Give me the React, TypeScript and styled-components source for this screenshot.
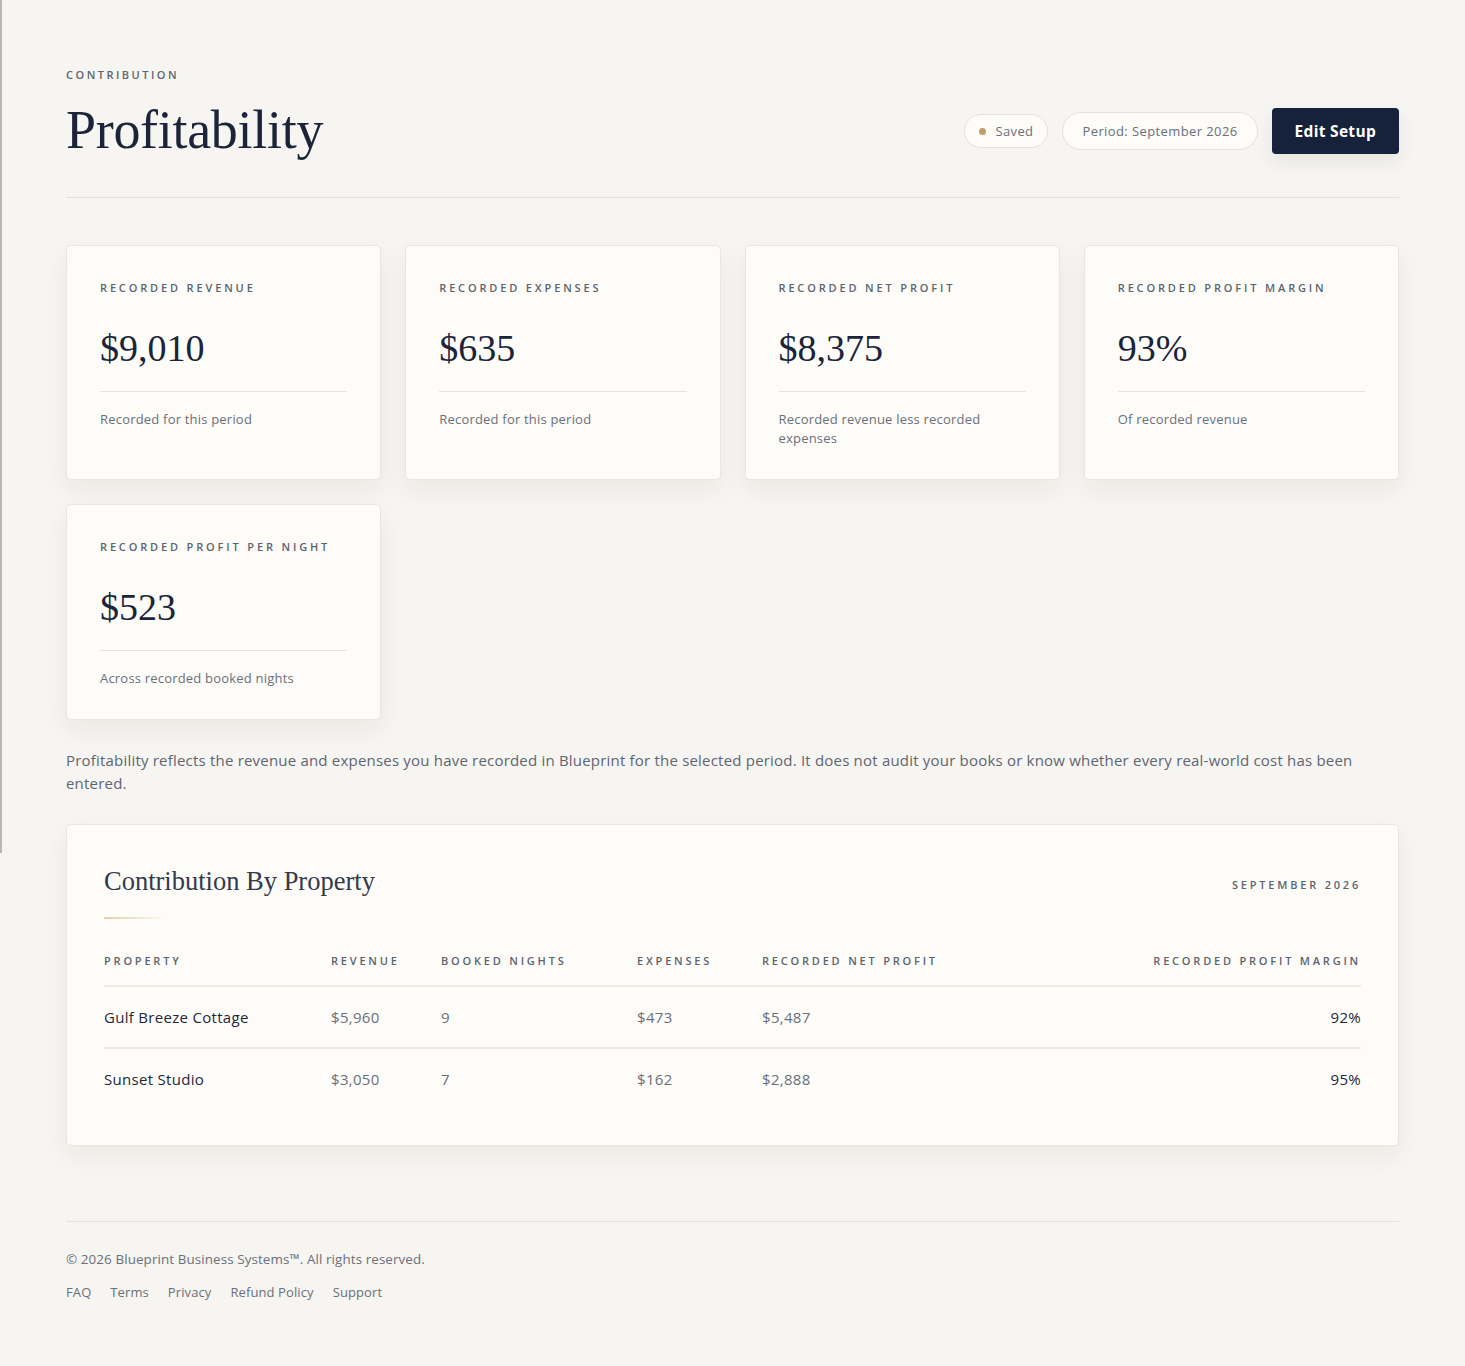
import React from "react";
import styled, { createGlobalStyle } from "styled-components";

const GlobalStyle = createGlobalStyle`
  html, body {
    margin: 0;
    padding: 0;
    background: #f6f5f1;
  }
  body {
    font-family: "Open Sans", "Noto Sans", sans-serif;
    color: #1b2438;
  }
  * { box-sizing: border-box; }
`;

const serif = `"Liberation Serif", "DejaVu Serif", serif`;

const EdgeLine = styled.div`
  position: fixed;
  left: 0;
  top: 0;
  width: 2px;
  height: 853px;
  background: #b9b7b1;
`;

const Page = styled.main`
  padding: 67px 66px 60px 66px;
`;

const Header = styled.header`
  display: flex;
  justify-content: space-between;
  align-items: flex-end;
  padding-bottom: 37px;
  border-bottom: 1px solid #e4e1da;
`;

const Eyebrow = styled.div`
  font-size: 11px;
  line-height: 16px;
  font-weight: 600;
  letter-spacing: 2.5px;
  color: #5c6470;
  text-transform: uppercase;
`;

const Title = styled.h1`
  margin: 17px 0 0 0;
  font-family: ${serif};
  font-weight: 400;
  font-size: 54px;
  line-height: 60px;
  color: #1b2438;
  letter-spacing: -0.3px;
`;

const Actions = styled.div`
  display: flex;
  align-items: center;
  gap: 14px;
  padding-bottom: 6px;
`;

const Pill = styled.div<{ $tall?: boolean }>`
  display: flex;
  align-items: center;
  gap: 9px;
  height: ${(p) => (p.$tall ? "38px" : "34px")};
  padding: 0 ${(p) => (p.$tall ? "19px" : "14px")};
  border: 1px solid #e6e2d9;
  border-radius: 20px;
  background: #fdfcf8;
  font-size: 13px;
  color: #6a707a;
  letter-spacing: 0.4px;
`;

const Dot = styled.span`
  width: 7px;
  height: 7px;
  border-radius: 50%;
  background: #bf9e6a;
`;

const PrimaryButton = styled.button`
  height: 46px;
  padding: 0 23px;
  border: none;
  border-radius: 4px;
  background: #16213a;
  color: #ffffff;
  font-family: inherit;
  font-size: 15.5px;
  font-weight: 700;
  letter-spacing: 0.3px;
  box-shadow: 0 8px 18px rgba(22, 33, 58, 0.08);
`;

const Grid = styled.section`
  display: grid;
  grid-template-columns: repeat(4, 1fr);
  gap: 24px;
  margin-top: 47px;
  align-items: start;
`;

const Card = styled.div<{ $tall?: boolean }>`
  background: #fdfcf9;
  border: 1px solid #e9e6e0;
  border-radius: 5px;
  box-shadow: 0 10px 24px rgba(30, 30, 20, 0.06);
  padding: 34px 33px 0 33px;
  height: ${(p) => (p.$tall ? "235px" : "216px")};
`;

const CardLabel = styled.div`
  font-size: 11px;
  font-weight: 600;
  letter-spacing: 2.85px;
  color: #5c6470;
  text-transform: uppercase;
  line-height: 16px;
`;

const CardValue = styled.div`
  font-family: ${serif};
  font-size: 38px;
  line-height: 44px;
  margin-top: 30px;
  padding-bottom: 21px;
  border-bottom: 1px solid #e6e3dc;
  color: #1b2438;
  font-variant-numeric: oldstyle-nums;
`;

const CardNote = styled.div`
  margin-top: 18px;
  font-size: 13px;
  line-height: 19px;
  color: #6a707a;
  letter-spacing: 0.2px;
  max-width: 220px;
`;

const Disclaimer = styled.p`
  margin: 29px 0 0 0;
  font-size: 15px;
  line-height: 23px;
  color: #5f6571;
  letter-spacing: 0.2px;
`;

const TableCard = styled.section`
  margin-top: 29px;
  background: #fdfcf9;
  border: 1px solid #e9e6e0;
  border-radius: 5px;
  box-shadow: 0 10px 24px rgba(30, 30, 20, 0.06);
  padding: 38px 37px 36px 37px;
`;

const TableHead = styled.div`
  display: flex;
  justify-content: space-between;
  align-items: flex-start;
`;

const SectionTitle = styled.h2`
  margin: 0;
  font-family: ${serif};
  font-weight: 400;
  font-size: 26.5px;
  line-height: 36px;
  color: #333a4c;
`;

const GoldRule = styled.div`
  width: 62px;
  height: 2px;
  margin-top: 18px;
  background: linear-gradient(90deg, #e0cfa8, rgba(224, 207, 168, 0));
`;

const PeriodTag = styled.div`
  margin-top: 14px;
  font-size: 11px;
  font-weight: 600;
  letter-spacing: 2.8px;
  color: #5c6470;
`;

const Table = styled.table`
  width: 100%;
  margin-top: 34px;
  border-collapse: collapse;
`;

const Th = styled.th<{ $right?: boolean; $w?: string }>`
  text-align: ${(p) => (p.$right ? "right" : "left")};
  width: ${(p) => p.$w || "auto"};
  padding: 0 0 17px 0;
  font-size: 11px;
  font-weight: 600;
  letter-spacing: 2.8px;
  color: #5c6470;
  border-bottom: 2px solid #eeebe5;
`;

const Td = styled.td<{ $right?: boolean; $strong?: boolean }>`
  text-align: ${(p) => (p.$right ? "right" : "left")};
  padding: 20px 0;
  font-size: 15px;
  line-height: 20px;
  color: ${(p) => (p.$strong ? "#1f2738" : "#6a707a")};
  letter-spacing: 0.3px;
`;

const Tr = styled.tr`
  & + & td {
    border-top: 2px solid #eeebe5;
  }
`;

const Footer = styled.footer`
  margin-top: 75px;
  border-top: 1px solid #e6e3dc;
  padding-top: 27px;
`;

const Copyright = styled.div`
  font-size: 13.4px;
  line-height: 20px;
  color: #6a707a;
  letter-spacing: 0.1px;
`;

const FooterLinks = styled.nav`
  display: flex;
  gap: 19px;
  margin-top: 13px;
`;

const FooterLink = styled.a`
  font-size: 13px;
  line-height: 20px;
  color: #6a707a;
  text-decoration: none;
  letter-spacing: 0.1px;
`;

const metrics = [
  { label: "Recorded Revenue", value: "$9,010", note: "Recorded for this period" },
  { label: "Recorded Expenses", value: "$635", note: "Recorded for this period" },
  { label: "Recorded Net Profit", value: "$8,375", note: "Recorded revenue less recorded expenses" },
  { label: "Recorded Profit Margin", value: "93%", note: "Of recorded revenue" },
  { label: "Recorded Profit Per Night", value: "$523", note: "Across recorded booked nights" },
];

const rows = [
  { name: "Gulf Breeze Cottage", revenue: "$5,960", nights: "9", expenses: "$473", net: "$5,487", margin: "92%" },
  { name: "Sunset Studio", revenue: "$3,050", nights: "7", expenses: "$162", net: "$2,888", margin: "95%" },
];

const App: React.FC = () => {
  return (
    <>
      <GlobalStyle />
      <EdgeLine />
      <Page>
        <Header>
          <div>
            <Eyebrow>Contribution</Eyebrow>
            <Title>Profitability</Title>
          </div>
          <Actions>
            <Pill>
              <Dot />
              Saved
            </Pill>
            <Pill $tall>Period: September 2026</Pill>
            <PrimaryButton>Edit Setup</PrimaryButton>
          </Actions>
        </Header>

        <Grid>
          {metrics.map((m, i) => (
            <Card key={m.label} $tall={i < 4}>
              <CardLabel>{m.label}</CardLabel>
              <CardValue>{m.value}</CardValue>
              <CardNote>{m.note}</CardNote>
            </Card>
          ))}
        </Grid>

        <Disclaimer>
          Profitability reflects the revenue and expenses you have recorded in Blueprint for the selected period. It does not
          audit your books or know whether every real-world cost has been entered.
        </Disclaimer>

        <TableCard>
          <TableHead>
            <div>
              <SectionTitle>Contribution By Property</SectionTitle>
              <GoldRule />
            </div>
            <PeriodTag>SEPTEMBER 2026</PeriodTag>
          </TableHead>
          <Table>
            <thead>
              <tr>
                <Th $w="227px">PROPERTY</Th>
                <Th $w="110px">REVENUE</Th>
                <Th $w="196px">BOOKED NIGHTS</Th>
                <Th $w="125px">EXPENSES</Th>
                <Th>RECORDED NET PROFIT</Th>
                <Th $right>RECORDED PROFIT MARGIN</Th>
              </tr>
            </thead>
            <tbody>
              {rows.map((r) => (
                <Tr key={r.name}>
                  <Td $strong>{r.name}</Td>
                  <Td>{r.revenue}</Td>
                  <Td>{r.nights}</Td>
                  <Td>{r.expenses}</Td>
                  <Td>{r.net}</Td>
                  <Td $right $strong>{r.margin}</Td>
                </Tr>
              ))}
            </tbody>
          </Table>
        </TableCard>

        <Footer>
          <Copyright>© 2026 Blueprint Business Systems™. All rights reserved.</Copyright>
          <FooterLinks>
            <FooterLink href="#">FAQ</FooterLink>
            <FooterLink href="#">Terms</FooterLink>
            <FooterLink href="#">Privacy</FooterLink>
            <FooterLink href="#">Refund Policy</FooterLink>
            <FooterLink href="#">Support</FooterLink>
          </FooterLinks>
        </Footer>
      </Page>
    </>
  );
};

export default App;
